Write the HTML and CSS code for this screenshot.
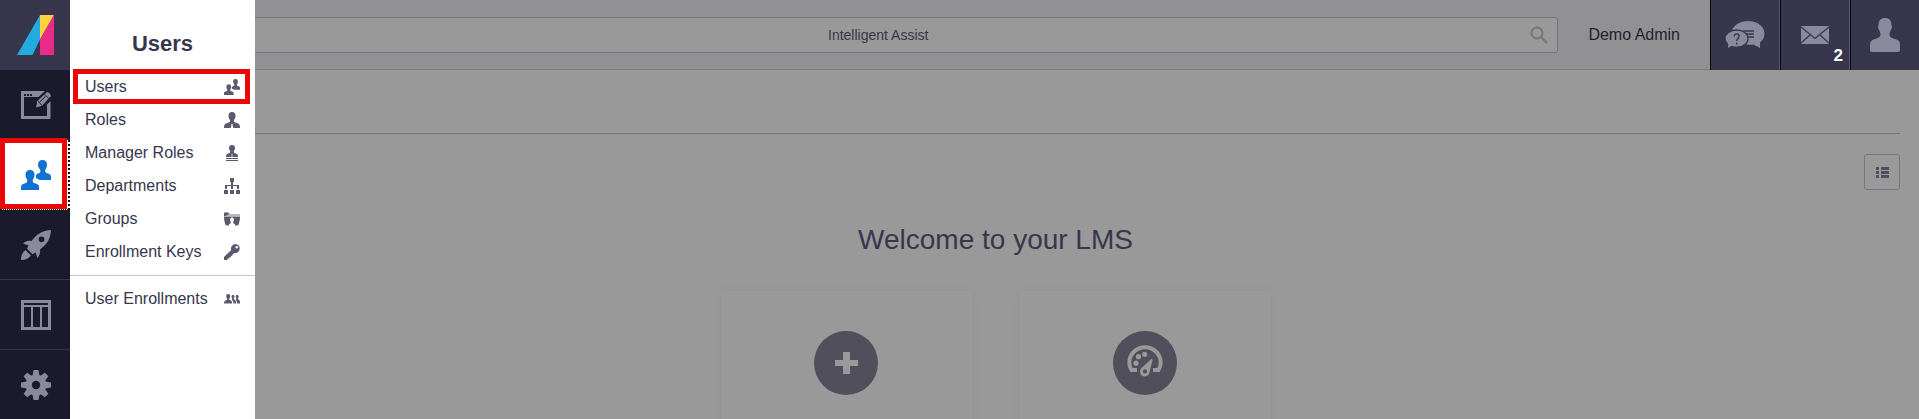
FILE: index.html
```
<!DOCTYPE html>
<html lang="en">
<head>
<meta charset="utf-8">
<title>Demo Admin - LMS</title>
<link rel="stylesheet" href="styles.css">
</head>
<body>

<!-- shared icon shapes -->
<svg class="defs" width="0" height="0" aria-hidden="true">
  <symbol id="i-person" viewBox="0 0 30 34">
    <path d="M15 0c4 0 6.500 2.500 6.500 7 0 1 .5 1.500.5 2.500s-.8 1.500-1.200 2.500c-.5 2-1.300 3-1.300 4.500 0 2 1.500 3 4 4 4 1.500 6.500 2 6.500 6V32c0 1.300-.7 2-2 2H2c-1.300 0-2-.7-2-2v-5.500c0-4 2.500-4.500 6.500-6 2.500-1 4-2 4-4 0-1.500-.8-2.500-1.300-4.500C8.800 11 8 10.500 8 9.500S8.500 8 8.500 7c0-4.500 2.500-7 6.500-7z"/>
  </symbol>
  <symbol id="i-users" viewBox="0 0 30 30">
    <path d="M21.500 0c3 0 4.500 2 4.500 4.800 0 2.500-1 3.700-1.700 5.200-.4 1.600.2 2.700 1.900 3.200 2.500.8 3.800 1.500 3.800 3.300V20H18.500c-.8-.8-2-1.300-3.500-1.800v-2.700c0-1 1-1.600 2.700-2.200 1.600-.6 2-1.700 1.500-3.300-.7-1.500-2.200-2.700-2.200-5.200C17 2 18.500 0 21.500 0z"/>
    <path d="M9 10c3 0 4.500 2 4.500 4.800 0 2.500-1 3.700-1.700 5.200-.4 1.600.2 2.700 1.900 3.200 2.700.8 4.300 1.500 4.300 3.300V30H0v-3.500c0-1.800 1.600-2.500 4.300-3.300 1.700-.5 2.300-1.600 1.900-3.200-.7-1.500-1.700-2.700-1.700-5.200C4.500 12 6 10 9 10z"/>
  </symbol>
</svg>

<div class="app">
  <nav class="sidebar">
    <a class="logo" href="#" aria-label="Home">
      <svg width="37" height="40" viewBox="0 0 37 40">
        <path fill="#23abe1" d="M23 0v24.500L15.500 40H0z"/>
        <path fill="#ffd13b" d="M23 0h14L23 24.500z"/>
        <path fill="#e92c8a" d="M37 0v40H23V24.500z"/>
      </svg>
    </a>
    <a class="nav-item" href="#" aria-label="Edit page">
      <svg width="31" height="28" viewBox="0 0 31 28">
        <path d="M0 0h24l-6.500 6H3v19h23V13.500l3.500-3.500v18H0z"/>
        <path d="M15 16.500l1.200-6.200L25.500 1.500c1.500-1 4.700 1.800 4.200 3.700L21 14.800z"/>
        <path class="cut" d="M3 3h2v2H3zM6 3h2v2H6zM9 3h2v2H9z"/>
        <path class="cut-line" d="M16.700 10.200l4.500 4.300M23.500 3.200l4.500 4.500M18.500 11.200l6-5.700"/>
      </svg>
    </a>
    <a class="nav-item active" href="#" aria-label="Users">
      <svg width="30" height="30"><use href="#i-users"/></svg>
    </a>
    <a class="nav-item" href="#" aria-label="Launch">
      <svg width="30" height="30" viewBox="0 0 30 30">
        <path fill-rule="evenodd" d="M30 0c-.5 7-2.500 12-7.500 16.500l-3.500 3c.5 3.500-.5 6-2.500 8.500l-2-5.500-3 1.700-5.500-5.500L7.500 15.500 2 13.500C4.500 11 7 10.200 10.500 11L13 8C17.500 3 22.500.5 30 0zM20.500 6.400a2.900 2.900 0 1 0 0 5.800 2.900 2.900 0 0 0 0-5.800z"/>
        <path d="M4.500 20l5.500 5.500c-2.500 3-5.500 4.500-10 4.500 0-4.500 1.500-7.500 4.500-10z"/>
      </svg>
    </a>
    <a class="nav-item" href="#" aria-label="Layout">
      <svg width="30" height="30" viewBox="0 0 30 30">
        <path fill-rule="evenodd" d="M0 0h30v30H0zM3 3v2h24V3zM3 7v20h7V7zM12 7v20h7V7zM21 7v20h6V7z"/>
      </svg>
    </a>
    <a class="nav-item" href="#" aria-label="Settings">
      <svg width="30" height="30" viewBox="-15 -15 30 30">
        <g id="teeth">
          <path d="M-2.500-15h5l1 6h-7zM-2.500 15h5l1-6h-7zM-15-2.500v5l6 1v-7zM15-2.500v5l-6 1v-7z"/>
        </g>
        <use href="#teeth" transform="rotate(45)"/>
        <path fill-rule="evenodd" d="M0-10.500a10.500 10.500 0 1 0 0 21 10.500 10.500 0 0 0 0-21zM0-4.200a4.200 4.200 0 1 1 0 8.400 4.200 4.200 0 0 1 0-8.400z"/>
      </svg>
    </a>
  </nav>

  <div class="page">
    <header class="topbar">
      <div class="search">
        <input type="text" placeholder="Intelligent Assist" aria-label="Intelligent Assist">
        <svg width="18" height="18" viewBox="0 0 18 18"><circle cx="7" cy="7" r="5.500"/><path d="M11 11l6 6"/></svg>
      </div>
      <span class="user-name">Demo Admin</span>
      <button class="tile" aria-label="Help">
        <svg width="40" height="30" viewBox="0 0 40 30">
          <path d="M23 1c9.500 0 16.500 5.500 16.500 12.500 0 4-1.700 7-4.500 9V28l-6.500-3.500c-5 .8-10.500 0-14-2.500C7 16 5 14 7.500 9 10.500 4 16 1 23 1z"/>
          <path class="cut-line" d="M18 11h11M20 14h9M22 17h7"/>
          <path class="bubble" d="M11.500 10C18 10 23 13.500 23 18.700c0 5-5 8.500-11.500 8.500-1.700 0-3.300-.2-4.800-.7L2.500 29.300V24C.8 22.500 0 20.700 0 18.700 0 13.500 5 10 11.500 10z"/>
          <path class="cut-line" d="M9.200 16.500c0-1.800.9-2.700 2.500-2.700s2.500.9 2.500 2.400c0 2-2.500 2.300-2.500 4.800M11.700 22.500v2"/>
        </svg>
      </button>
      <button class="tile" aria-label="Messages">
        <svg width="28" height="18" viewBox="0 0 28 18">
          <rect width="28" height="18" rx="1"/>
          <path class="cut-line" d="M0 1l14 11.500L28 1M0 17l9.500-8.500M28 17l-9.500-8.500"/>
        </svg>
        <span class="badge">2</span>
      </button>
      <button class="tile" aria-label="Profile">
        <svg width="30" height="34"><use href="#i-person"/></svg>
      </button>
    </header>

    <main class="content">
      <div class="page-head"></div>
      <div class="tools">
        <button class="list-btn" aria-label="List view">
          <svg width="13" height="11" viewBox="0 0 13 11">
            <path d="M0 0h3v3H0zM5 0h8v3H5zM0 4h3v3H0zM5 4h8v3H5zM0 8h3v3H0zM5 8h8v3H5z"/>
          </svg>
        </button>
      </div>
      <h1>Welcome to your LMS</h1>
      <div class="cards">
        <a class="card" href="#" aria-label="Add">
          <span class="circle">
            <svg width="23" height="22" viewBox="0 0 23 22"><path d="M8 0h7v8h8v6h-8v8H8v-8H0V8h8z"/></svg>
          </span>
        </a>
        <a class="card" href="#" aria-label="Dashboard">
          <span class="circle">
            <svg width="36" height="36" viewBox="0 0 36 36">
              <path class="arc" d="M10 25H4.500C3 22.500 2.300 20.500 2.300 17.800 2.300 9 9.300 2.300 18 2.300S33.700 9 33.700 17.800c0 2.700-.7 4.700-2.200 7.200H26"/>
              <circle cx="9" cy="18.200" r="2.600"/><circle cx="11.500" cy="11.700" r="2.600"/><circle cx="17.700" cy="9.300" r="2.600"/>
              <path fill-rule="evenodd" d="M24.500 13.800c1 .2 1.200.7 1 1.500l-2.600 10.500c-.3 3-2 5.700-5 5.700s-4.900-2.300-4.900-5c0-1.300.5-2.500 1.400-3.400zM18 24.300a2.100 2.100 0 1 0 0 4.200 2.100 2.100 0 0 0 0-4.200z"/>
            </svg>
          </span>
        </a>
      </div>
    </main>
  </div>

  <aside class="menu">
    <h2>Users</h2>
    <ul>
      <li><a class="marked" href="#">Users
        <svg width="16" height="16"><use href="#i-users"/></svg></a></li>
      <li><a href="#">Roles
        <svg width="16" height="16" viewBox="0 0 16 16"><path fill-rule="evenodd" d="M8 0c2.500 0 3.500 1.500 3.500 3.700 0 2-.7 3.300-1.500 4.300v1.700c1 .8 2.500 1 4 1.800 1.500.7 2 1.500 2 4.500H0c0-3 .5-3.800 2-4.500 1.500-.8 3-1 4-1.800V8c-.8-1-1.500-2.300-1.500-4.300C4.500 1.500 5.500 0 8 0zM6.300 11.500L7.500 13l-.8 3h2.600l-.8-3 1.200-1.500L8 12.500z"/></svg></a></li>
      <li><a href="#">Manager Roles
        <svg width="16" height="16" viewBox="0 0 16 16"><path fill-rule="evenodd" d="M8 0c2 0 3 1.200 3 3 0 1.500-.6 2.500-1.200 3.200V7.500c1 .7 2 .8 3 1.400 1 .6 1.200 1.300 1.200 3.100H2c0-1.800.2-2.500 1.200-3.100 1-.6 2-.7 3-1.400V6.200C5.600 5.500 5 4.500 5 3c0-1.800 1-3 3-3zM7 9l1 1-.7 2h1.400L8 10l1-1zM2 13h12v1H2zM2 15h12v1H2z"/></svg></a></li>
      <li><a href="#">Departments
        <svg width="16" height="16" viewBox="0 0 16 16"><path d="M6 0h4v4H6zM7 4h2v3H7zM1 7h14v4h-2V8H9v3H7V8H3v3H1zM0 12h4v4H0zM6 12h4v4H6zM12 12h4v4h-4z"/></svg></a></li>
      <li><a href="#">Groups
        <svg width="16" height="14" viewBox="0 0 16 14"><path fill-rule="evenodd" d="M0 .5h4.500l1 1.500H16v2.500H0zM0 4h16v1c0 3-.7 5-1.500 8l-3 .8-.8-1.800-1.500-.8V9.800c1.300-1.500 1-4.300-1.200-4.300S5.500 8.300 6.800 9.800v1.400l-1.500.8-.8 1.800-3-.8C.7 10 0 8 0 5z"/><path class="pale" d="M5 2h11v2H1.500z"/></svg></a></li>
      <li><a href="#">Enrollment Keys
        <svg width="16" height="16" viewBox="0 0 16 16"><path fill-rule="evenodd" d="M11.500 0a4.500 4.500 0 1 1-1.200 8.900L8.500 10.500v1L7 12v1l-1.500.3v1L4 14.500 3 16H0v-3l7.200-7A4.600 4.600 0 0 1 11.500 0zm1.200 2a1.300 1.300 0 1 0 0 2.600 1.300 1.300 0 0 0 0-2.600z"/></svg></a></li>
      <li class="split"><a href="#">User Enrollments
        <svg width="16" height="10" viewBox="0 0 16 10"><path d="M4.200 0c1.300 0 2 .8 2 2.200 0 1.300-.5 1.800-1 2.600v1c1.500.7 3 1.200 3 3.200v.5H0V9c0-2 1.700-2.500 3.200-3.200v-1c-.5-.8-1-1.300-1-2.600 0-1.400.7-2.200 2-2.200z"/><path d="M9 1c1 0 1.500.6 1.500 1.600 0 .9-.4 1.400-.7 1.900v.8c1.100.6 2.200 1.200 2.200 2.900v1.300H9.500c0-2-.7-2.800-1.900-3.700.6-.6.7-.8.6-1.300-.4-.5-.7-1-.7-1.900C7.500 1.600 8 1 9 1zM13.200 1c1 0 1.500.6 1.500 1.600 0 .9-.4 1.400-.7 1.900v.8c1.100.6 2 1.200 2 2.900v1.300h-3c0-1.900-.5-2.900-1.400-3.700.6-.6.9-.8.8-1.300-.4-.5-.7-1-.7-1.900 0-1 .5-1.600 1.500-1.600z"/></svg></a></li>
    </ul>
  </aside>
</div>

</body>
</html>
```
FILE: styles.css
```
*, *::after { box-sizing: border-box; }
body { margin: 0; background: #999; color: #37364d; font-family: "Liberation Sans", Arial, sans-serif; font-size: 16px; }
a { color: inherit; text-decoration: none; }
button { padding: 0; border: 0; cursor: pointer; font-family: inherit; }
svg { display: block; fill: currentColor; flex: none; }
.defs { position: absolute; }

.app { display: flex; height: 100vh; overflow: hidden; position: relative; }

/* left navigation */
.sidebar { flex: none; width: 70px; background: #1b1a2c; }
.logo { display: flex; align-items: center; justify-content: center; height: 70px; background: #37364d; }
.nav-item { display: flex; align-items: center; justify-content: center; height: 70px; padding-left: 2px; border-bottom: 1px solid #363548; color: #8b899d; }
.nav-item.active { padding-left: 4px; background: #fff; color: #1073cf; border-right: 2px dotted #111; border-bottom: 1px dotted #111; position: relative; }
.nav-item.active::after { content: ""; position: absolute; top: -2px; left: 0; width: 67px; height: 71px; border: 5px solid #ea0707; }
.cut { fill: #1b1a2c; }
.sidebar .cut-line { fill: none; stroke: #1b1a2c; }

/* flyout menu */
.menu { position: absolute; left: 70px; top: 0; bottom: 0; width: 185px; background: #fff; }
.menu h2 { margin: 0; padding: 31px 0 13px; font-size: 22px; line-height: 26px; text-align: center; }
.menu ul { margin: 0; padding: 0; list-style: none; }
.menu li a { display: flex; align-items: center; justify-content: space-between; height: 33px; padding: 0 15px; position: relative; }
.menu svg { color: #5a596e; }
.menu .pale { fill: #b6b5c2; }
.menu .marked::after { content: ""; position: absolute; inset: -1px 5px -1px 3px; border: 5px solid #ea0707; }
.menu .split { margin-top: 7px; padding-top: 6px; border-top: 1px solid #c3c2cf; }

/* top bar */
.page { flex: 1; }
.topbar { display: flex; align-items: center; height: 70px; padding-left: 130px; background: #919193; border-bottom: 1px solid #7c7c80; }
.search { flex: 1; display: flex; align-items: center; height: 36px; padding: 0 9px; background: #999; border: 1px solid #75747f; border-radius: 3px; }
.search input { flex: 1; padding: 0 0 0 16px; border: 0; outline: 0; background: none; font: 14px "Liberation Sans", Arial, sans-serif; text-align: center; color: #37364d; }
.search input::placeholder { color: #37364d; opacity: 1; }
.search svg { fill: none; stroke: #75747f; stroke-width: 2; }
.user-name { margin: 0 30px; color: #21202f; }
.tile { display: flex; align-items: center; justify-content: center; align-self: flex-start; width: 70px; height: 70px; background: #37364d; border-left: 1px solid #08080c; border-right: 1px solid #56556a; color: #8b899d; position: relative; }
.tile:last-child { width: 69px; border-right: 0; }
.tile .cut-line { fill: none; stroke: #37364d; stroke-width: 1.3; }
.tile .bubble { stroke: #37364d; stroke-width: 1.3; }
.badge { position: absolute; right: 6px; bottom: 4px; color: #fff; font-size: 17px; font-weight: bold; }

/* dashboard */
.content { padding: 0 19px 0 21px; }
.page-head { height: 64px; margin-left: -21px; border-bottom: 1px solid #75747a; }
.tools { display: flex; justify-content: flex-end; padding-top: 20px; }
.list-btn { display: flex; align-items: center; justify-content: center; width: 36px; height: 36px; background: none; border: 1px solid #75747f; border-radius: 3px; color: #504f5b; }
h1 { margin: 34px 0 35px; font-size: 28px; line-height: 32px; font-weight: normal; text-align: center; }
.cards { display: flex; justify-content: center; gap: 48px; }
.card { display: flex; justify-content: center; width: 251px; height: 250px; padding-top: 40px; border-radius: 3px; box-shadow: 0 0 10px rgba(0, 0, 0, 0.05); }
.circle { display: flex; align-items: center; justify-content: center; width: 64px; height: 64px; border-radius: 50%; background: #504f5b; color: #999; }
.arc { fill: none; stroke: currentColor; stroke-width: 4; }
```
